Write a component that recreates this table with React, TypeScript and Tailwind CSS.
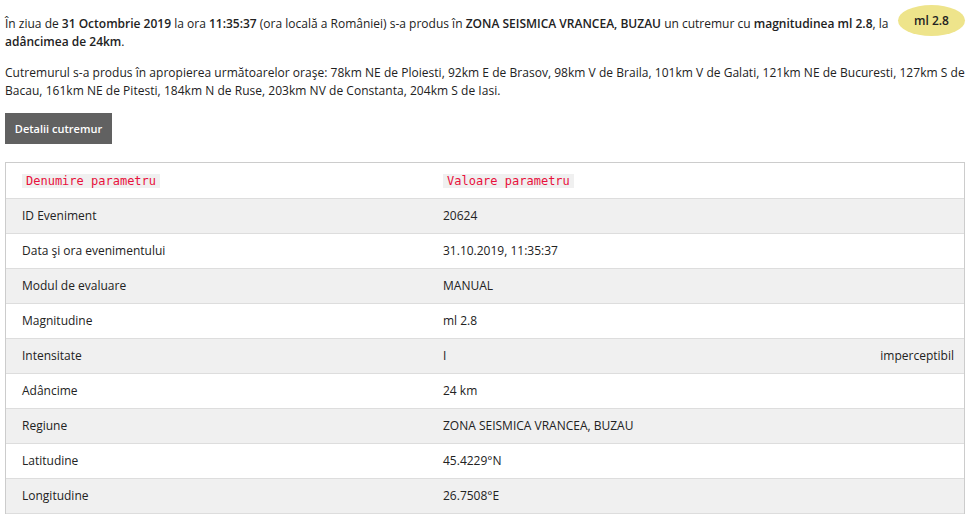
import React from "react";

const rows: [string, string, string?][] = [
  ["ID Eveniment", "20624"],
  ["Data şi ora evenimentului", "31.10.2019, 11:35:37"],
  ["Modul de evaluare", "MANUAL"],
  ["Magnitudine", "ml 2.8"],
  ["Intensitate", "I", "imperceptibil"],
  ["Adâncime", "24 km"],
  ["Regiune", "ZONA SEISMICA VRANCEA, BUZAU"],
  ["Latitudine", "45.4229°N"],
  ["Longitudine", "26.7508°E"],
];

export default function App() {
  return (
    <div
      className="bg-white text-[12px] leading-[18px] text-[#222] pl-[5px] pr-[8px] pt-[15px] w-[973px] h-[514px] overflow-hidden"
      style={{ fontFamily: '"Open Sans", sans-serif' }}
    >
      <div className="float-right -mt-[10px] ml-[6px] w-[67px] h-[31px] rounded-[50%] bg-[#eee48b] flex items-center justify-center font-semibold text-[12px] text-[#222]">
        ml 2.8
      </div>
      <p>
        În ziua de <b className="font-semibold">31 Octombrie 2019</b> la ora{" "}
        <b className="font-semibold">11:35:37</b> (ora locală a României) s-a produs în{" "}
        <b className="font-semibold">ZONA SEISMICA VRANCEA, BUZAU</b> un cutremur cu{" "}
        <b className="font-semibold">magnitudinea ml 2.8</b>, la{" "}
        <b className="font-semibold">adâncimea de 24km</b>.
      </p>
      <p className="mt-[13px] clear-both tracking-[0.03px]">
        Cutremurul s-a produs în apropierea următoarelor oraşe: 78km NE de Ploiesti, 92km E de Brasov, 98km V de Braila, 101km V de Galati, 121km NE de Bucuresti, 127km S de Bacau, 161km NE de Pitesti, 184km N de Ruse, 203km NV de Constanta, 204km S de Iasi.
      </p>
      <div className="mt-[13px]">
        <button className="w-[107px] h-[31px] bg-[#616161] text-white text-[11px] font-semibold">
          Detalii cutremur
        </button>
      </div>
      <div className="mt-[18px] w-[960px] border border-[#cccccc] border-b-0">
        <div className="grid grid-cols-[421px_1fr_auto] h-[36px] items-center border-b border-[#dddddd] bg-white">
          <div className="pl-[16px]">
            <code
              className="bg-[#f0f0f0] text-[#e8103c] text-[12px] leading-[18px] px-[4px] py-[0px]"
              style={{ fontFamily: '"DejaVu Sans Mono", monospace' }}
            >
              Denumire parametru
            </code>
          </div>
          <div className="pl-[16px]">
            <code
              className="bg-[#f0f0f0] text-[#e8103c] text-[12px] leading-[18px] px-[4px] py-[0px]"
              style={{ fontFamily: '"DejaVu Sans Mono", monospace' }}
            >
              Valoare parametru
            </code>
          </div>
          <div />
        </div>
        {rows.map(([a, b, c], i) => (
          <div
            key={a}
            className={
              "grid grid-cols-[421px_1fr_auto] h-[35px] items-center border-b border-[#dddddd] " +
              (i % 2 === 0 ? "bg-[#f0f0f0]" : "bg-white")
            }
          >
            <div className="pl-[16px]">{a}</div>
            <div className="pl-[16px]">{b}</div>
            <div className="pr-[10px]">{c ?? ""}</div>
          </div>
        ))}
      </div>
    </div>
  );
}
